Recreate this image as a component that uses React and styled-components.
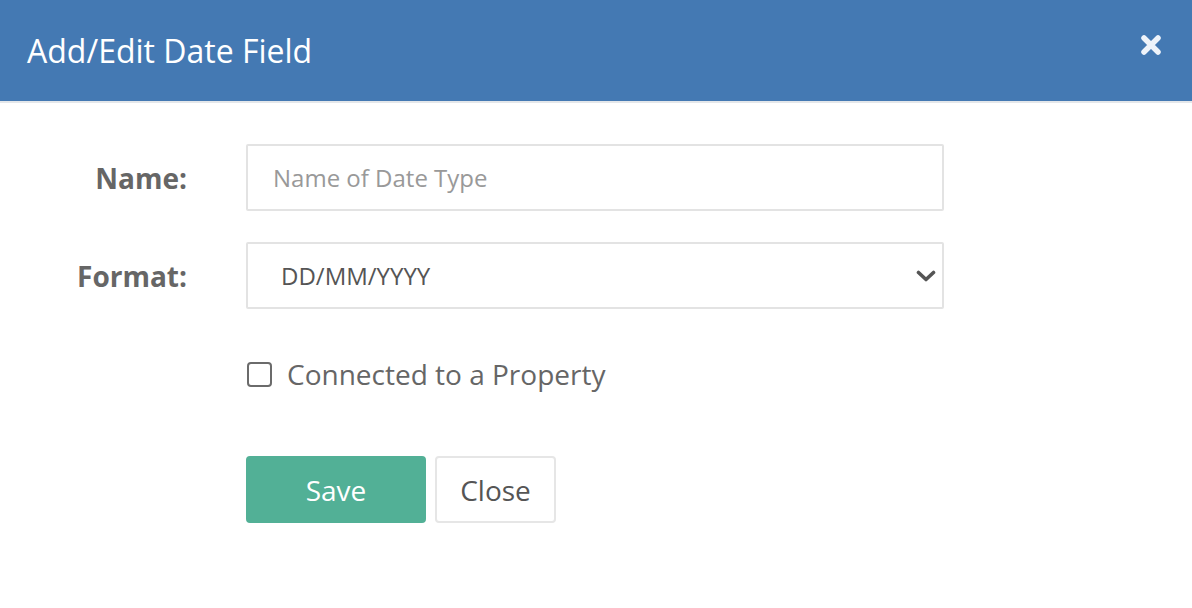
import React from 'react';
import styled, { createGlobalStyle } from 'styled-components';

const GlobalStyle = createGlobalStyle`
  html, body {
    margin: 0;
    padding: 0;
    background: #fff;
    font-family: "Open Sans", "Liberation Sans", sans-serif;
  }
  * { box-sizing: border-box; }
`;

const Modal = styled.div`
  width: 1192px;
  height: 608px;
  background: #fff;
`;

const Header = styled.div`
  height: 103px;
  background: #4479b3;
  border-bottom: 2px solid #e4e7ea;
  display: flex;
  align-items: center;
  justify-content: space-between;
  padding: 0 30px 0 27px;
`;

const Title = styled.h4`
  margin: 0;
  color: #fff;
  font-size: 32px;
  font-weight: 400;
`;

const CloseIcon = styled.button`
  border: 0;
  background: none;
  padding: 0;
  width: 22px;
  height: 22px;
  display: flex;
  align-self: flex-start;
  margin-top: 34px;
  cursor: pointer;
`;

const Body = styled.form`
  padding: 41px 0 0;
  display: grid;
  grid-template-columns: 187px 698px;
  column-gap: 59px;
  align-items: center;
`;

const Label = styled.label`
  text-align: right;
  font-weight: 700;
  font-size: 28px;
  color: #666;
  margin-bottom: ${p => p.$gap || 0}px;
`;

const Field = styled.div`
  position: relative;
  margin-bottom: ${p => p.$gap || 0}px;
`;

const Input = styled.input`
  width: 100%;
  height: 67px;
  border: 2px solid #e3e3e3;
  border-radius: 2px;
  padding: 0 25px;
  font-family: inherit;
  font-size: 24px;
  color: #555;
  outline: none;
  &::placeholder { color: #999; }
`;

const Select = styled.div`
  width: 100%;
  height: 67px;
  border: 2px solid #e3e3e3;
  border-radius: 2px;
  padding: 0 6px 0 33px;
  display: flex;
  align-items: center;
  justify-content: space-between;
  font-size: 24px;
  color: #555;
`;

const CheckRow = styled.label`
  grid-column: 2;
  display: flex;
  align-items: center;
  gap: 15px;
  font-size: 28px;
  line-height: 38px;
  color: #666;
  margin-top: 46px;
`;

const Box = styled.span`
  width: 25px;
  height: 25px;
  border: 2px solid #6b6b6b;
  border-radius: 4px;
  margin-left: 1px;
`;

const Buttons = styled.div`
  grid-column: 2;
  display: flex;
  gap: 9px;
  margin-top: 63px;
`;

const Button = styled.button`
  height: 67px;
  width: ${p => p.$width}px;
  padding: 0;
  border-radius: 4px;
  font-family: inherit;
  font-size: 28px;
  border: 2px solid ${p => (p.$primary ? '#52b096' : '#e6e6e6')};
  background: ${p => (p.$primary ? '#52b096' : '#fff')};
  color: ${p => (p.$primary ? '#fff' : '#555')};
`;

export default function App() {
  return (
    <Modal>
      <GlobalStyle />
      <Header>
        <Title>Add/Edit Date Field</Title>
        <CloseIcon aria-label="Close">
          <svg width="22" height="22" viewBox="0 0 22 22">
            <path
              d="M4 4 L18 18 M18 4 L4 18"
              stroke="#eef3fa"
              strokeWidth="5.5"
              strokeLinecap="round"
            />
          </svg>
        </CloseIcon>
      </Header>
      <Body>
        <Label $gap={31}>Name:</Label>
        <Field $gap={31}>
          <Input placeholder="Name of Date Type" />
        </Field>
        <Label>Format:</Label>
        <Field>
          <Select>
            <span>DD/MM/YYYY</span>
            <svg width="20" height="14" viewBox="0 0 20 14">
              <path
                d="M2.5 3.5 L10 10.5 L17.5 3.5"
                fill="none"
                stroke="#555"
                strokeWidth="3.6"
                strokeLinecap="round"
                strokeLinejoin="round"
              />
            </svg>
          </Select>
        </Field>
        <CheckRow>
          <Box />
          Connected to a Property
        </CheckRow>
        <Buttons>
          <Button type="button" $primary $width={180}>Save</Button>
          <Button type="button" $width={121}>Close</Button>
        </Buttons>
      </Body>
    </Modal>
  );
}
